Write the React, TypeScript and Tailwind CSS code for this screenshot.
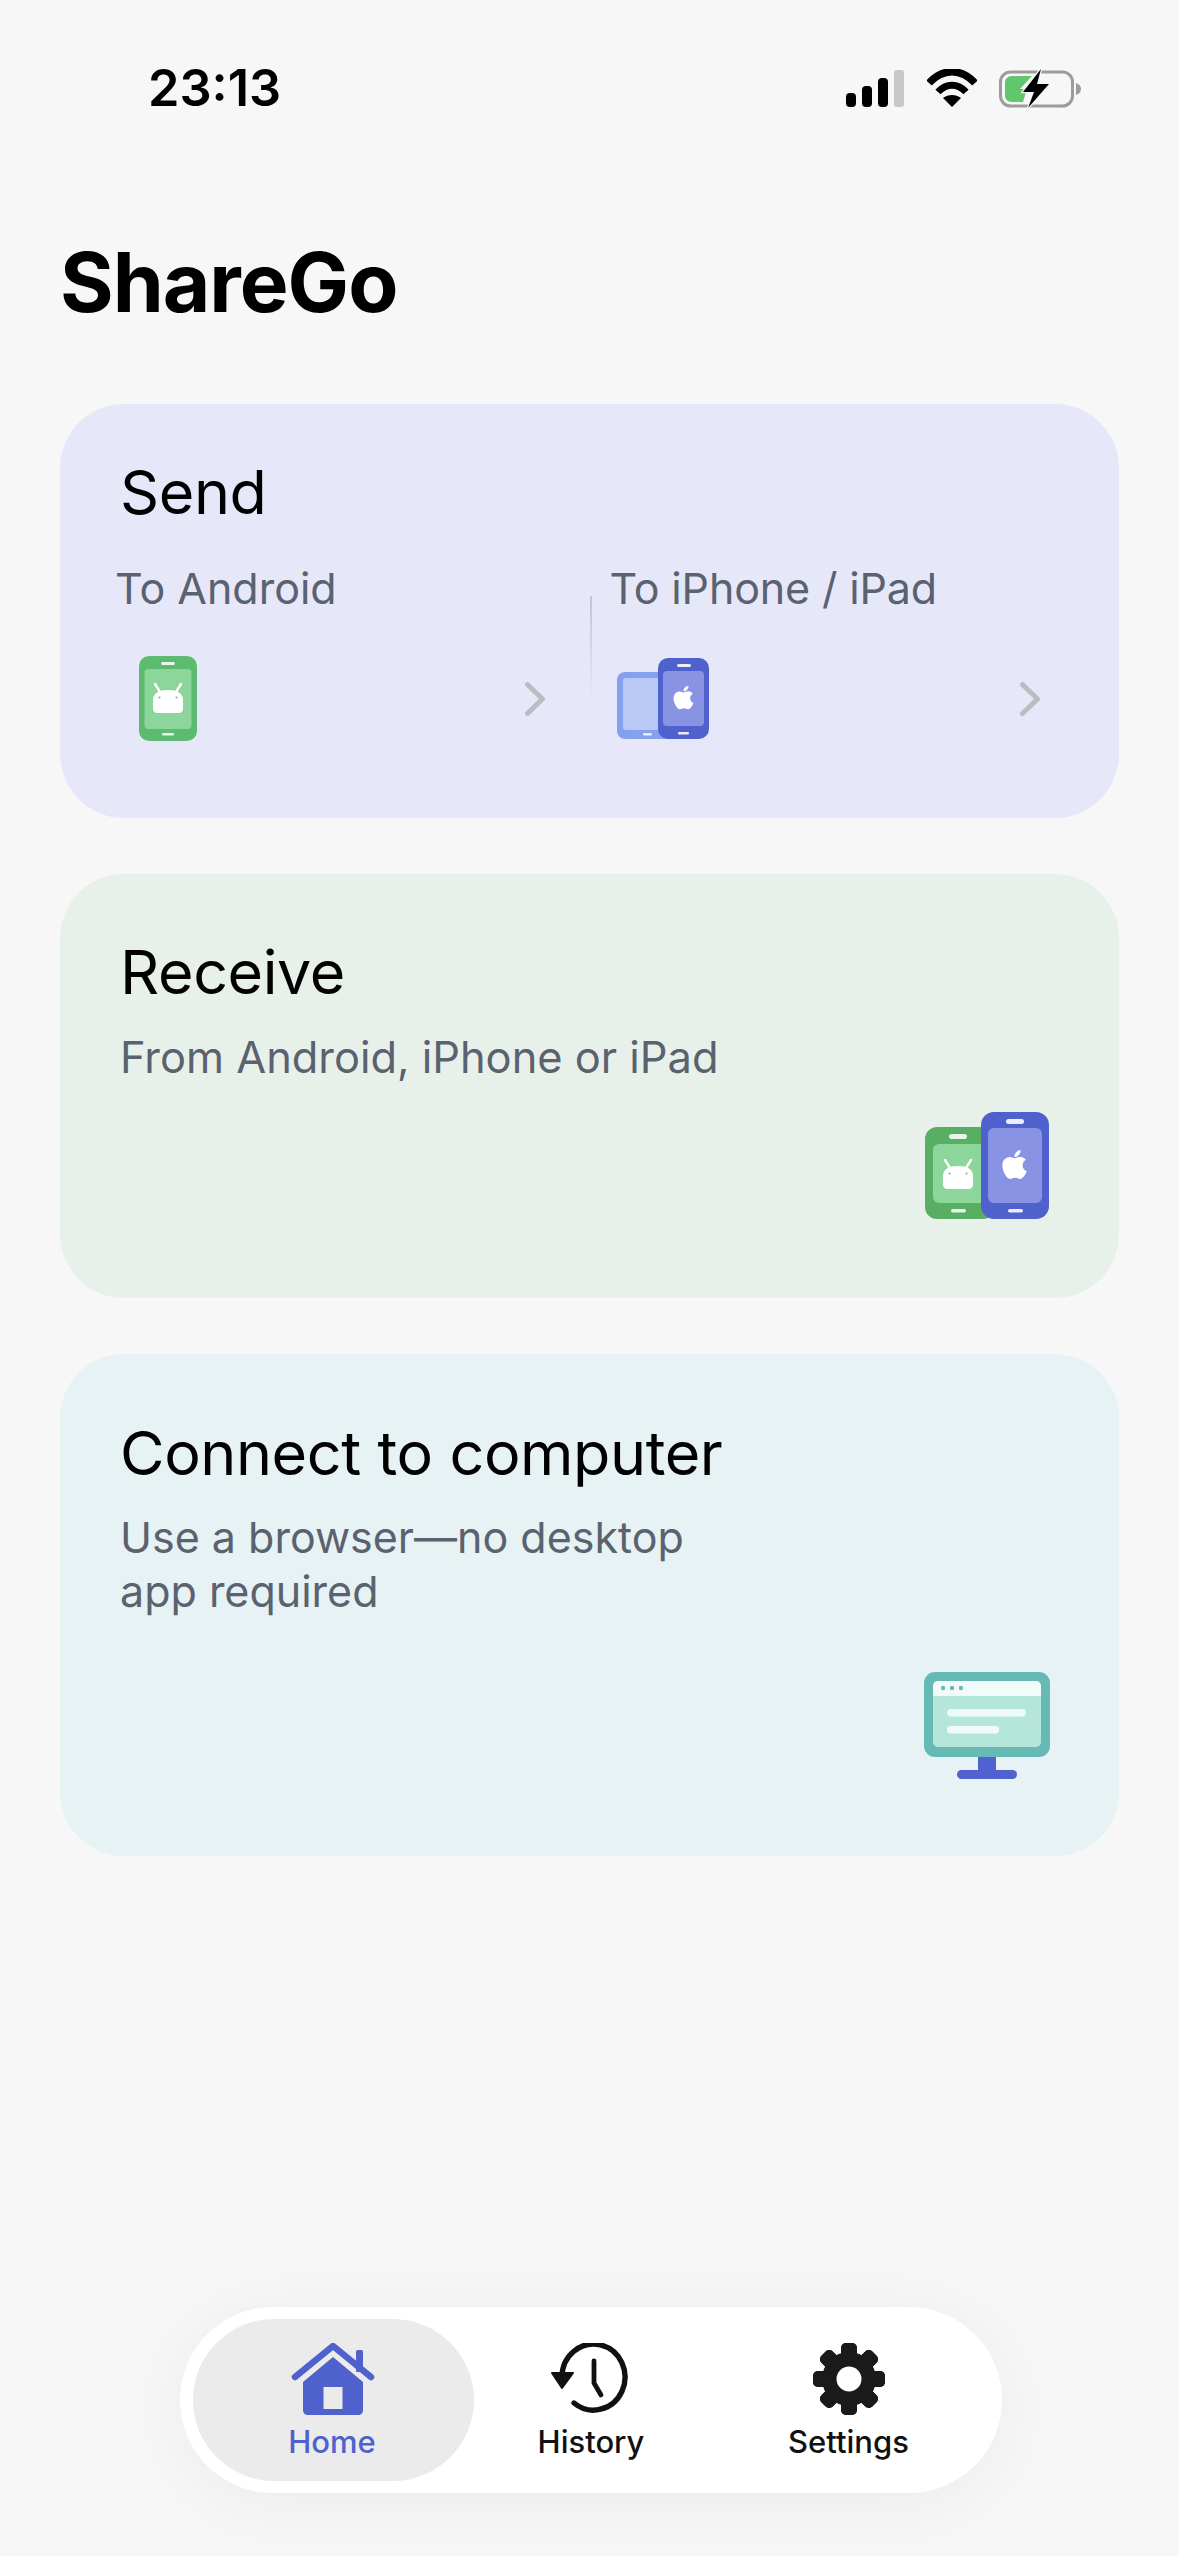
import React from "react";

const Android = ({ x, y, s }: { x: number; y: number; s: number }) => (
  <g transform={`translate(${x} ${y}) scale(${s})`} fill="#fff">
    <path d="M0 17 C0 10 6 7 15 7 C24 7 30 10 30 17 V26 C30 28 28 30 26 30 H4 C2 30 0 28 0 26 Z" />
    <path d="M7 9 L2 1 M23 9 L28 1" stroke="#fff" strokeWidth="2.4" strokeLinecap="round" />
    <circle cx="6.5" cy="14.5" r="1.1" fill="#7bb88a" />
    <circle cx="23.5" cy="14.5" r="1.1" fill="#7bb88a" />
  </g>
);

const AppleMark = ({ x, y, s }: { x: number; y: number; s: number }) => (
  <svg x={x} y={y} width={s} height={s} viewBox="0 0 384 512" fill="#fff">
    <path d="M318.7 268.7c-.2-36.7 16.4-64.4 50-84.8-18.8-26.9-47.2-41.7-84.7-44.6-35.5-2.8-74.3 20.7-88.5 20.7-15 0-49.4-19.7-76.4-19.7C63.3 141.2 4 184.8 4 273.5q0 39.3 14.4 81.2c12.8 36.7 59 126.7 107.2 125.2 25.2-.6 43-17.9 75.8-17.9 31.8 0 48.3 17.9 76.4 17.9 48.6-.7 90.4-82.5 102.6-119.3-65.2-30.7-61.7-90-61.7-91.9zm-56.6-164.2c27.3-32.4 24.8-61.9 24-72.5-24.1 1.4-52 16.4-67.9 34.9-17.5 19.8-27.8 44.3-25.6 71.9 26.1 2 49.9-11.4 69.5-34.3z" />
  </svg>
);

const AndroidPhoneSmall = () => (
  <svg width="58" height="85" viewBox="0 0 58 85" className="block">
    <rect width="58" height="85" rx="10" fill="#5cbb6e" />
    <rect x="5.5" y="13" width="47" height="60" rx="4" fill="#8cd69b" />
    <rect x="22" y="6" width="14" height="3" rx="1.5" fill="#e8f6ea" />
    <rect x="23" y="77" width="12" height="2.5" rx="1.2" fill="#e8f6ea" />
    <Android x={14} y={27} s={1} />
  </svg>
);

const IosPair = () => (
  <svg width="92" height="81" viewBox="0 0 92 81" className="block">
    <rect y="14" width="60" height="67" rx="8" fill="#85a0ec" />
    <rect x="6" y="20" width="50" height="52" rx="3" fill="#b9c9f6" />
    <rect x="26" y="75" width="9" height="2.5" rx="1.2" fill="#e6ecfc" />
    <rect x="41" width="51" height="81" rx="10" fill="#4f61cc" />
    <rect x="46" y="13" width="41" height="55" rx="4" fill="#8993e4" />
    <rect x="60" y="6" width="14" height="3" rx="1.5" fill="#eceefb" />
    <rect x="61" y="74" width="11" height="2.5" rx="1.2" fill="#eceefb" />
    <AppleMark x={53} y={26} s={27} />
  </svg>
);

const PairLarge = () => (
  <svg width="124" height="107" viewBox="0 0 124 107" className="block">
    <rect y="15" width="70" height="92" rx="12" fill="#58ae62" />
    <rect x="8" y="32" width="62" height="59" rx="6" fill="#8cd69b" />
    <rect x="24" y="22" width="18" height="5" rx="2.5" fill="#e8f6ea" />
    <rect x="26" y="97" width="15" height="3.5" rx="1.7" fill="#e8f6ea" />
    <Android x={18} y={47} s={1} />
    <rect x="56" width="68" height="107" rx="13" fill="#4f61cc" />
    <rect x="63" y="16" width="54" height="75" rx="6" fill="#8993e4" />
    <rect x="81" y="7" width="18" height="5" rx="2.5" fill="#eceefb" />
    <rect x="83" y="97" width="15" height="3.5" rx="1.7" fill="#eceefb" />
    <AppleMark x={73} y={36} s={33} />
  </svg>
);

const Monitor = () => (
  <svg width="126" height="107" viewBox="0 0 126 107" className="block">
    <rect width="126" height="85" rx="11" fill="#67b9b5" />
    <rect x="9" y="9" width="108" height="66" rx="5" fill="#b5e6da" />
    <path d="M14 9 H112 a5 5 0 0 1 5 5 V24 H9 V14 a5 5 0 0 1 5 -5 Z" fill="#f3fbfa" />
    <circle cx="19" cy="16" r="2.2" fill="#67b9b5" />
    <circle cx="28" cy="16" r="2.2" fill="#67b9b5" />
    <circle cx="37" cy="16" r="2.2" fill="#67b9b5" />
    <rect x="23" y="37" width="79" height="7.5" rx="3.7" fill="#f0fafa" />
    <rect x="23" y="54" width="52" height="7.5" rx="3.7" fill="#f0fafa" />
    <rect x="54" y="85" width="18" height="15" fill="#5161cf" />
    <rect x="33" y="98" width="60" height="9" rx="4.5" fill="#5161cf" />
  </svg>
);

const Chevron = () => (
  <svg width="20" height="34" viewBox="0 0 20 34" className="block">
    <path d="M2.5 2.5 L17.5 17 L2.5 31.5" fill="none" stroke="#bcbcc2" strokeWidth="5" strokeLinecap="round" strokeLinejoin="round" />
  </svg>
);

const StatusIcons = () => (
  <div className="flex items-center">
    <svg width="58" height="37" viewBox="0 0 58 37" className="block">
      <rect y="23" width="10" height="14" rx="4" fill="#000" />
      <rect x="16" y="16" width="10" height="21" rx="4" fill="#000" />
      <rect x="32" y="8" width="10" height="29" rx="4" fill="#000" />
      <rect x="48" width="10" height="37" rx="3" fill="#c7c7c7" />
    </svg>
    <svg width="50" height="38" viewBox="0 0 50 38" className="block ml-[23px]">
      <path d="M2 14 C16 -1 34 -1 48 14" stroke="#000" strokeWidth="7.5" fill="none" strokeLinejoin="round" />
      <path d="M11 23 C19 14 31 14 39 23" stroke="#000" strokeWidth="7" fill="none" />
      <path d="M25 38 L16 29 C21 25 29 25 34 29 Z" fill="#000" />
    </svg>
    <svg width="83" height="39" viewBox="0 0 83 39" className="block ml-[22px]">
      <rect x="1.5" y="3" width="72" height="34" rx="10" fill="none" stroke="#9c9c9c" strokeWidth="3" />
      <path d="M77 14 C80 15 82 17 82 20 C82 23 80 25 77 26 Z" fill="#9c9c9c" />
      <path d="M13 7 H33 L21 20 H28 L24 33 H13 C9 33 6 30 6 27 V13 C6 10 9 7 13 7 Z" fill="#62c66d" />
      <path d="M42 0 L24 23 H35 L29 39 L50 15 H38 Z" fill="#000" stroke="#f7f7f7" strokeWidth="2.5" paintOrder="stroke" />
    </svg>
  </div>
);

const HomeIcon = () => (
  <svg width="84" height="72" viewBox="0 0 84 72" className="block">
    <path d="M42 14 L72 39 V67 C72 70 70 72 67 72 H17 C14 72 12 70 12 67 V39 Z" fill="#4f61cc" />
    <rect x="32.5" y="44" width="19" height="22" fill="#ebebec" />
    <path d="M4 34 L42 3 L80 34" stroke="#4f61cc" strokeWidth="6.5" fill="none" strokeLinecap="round" strokeLinejoin="round" />
    <rect x="65" y="7" width="7" height="22" rx="1.5" fill="#4f61cc" />
  </svg>
);

const HistoryIcon = () => (
  <svg width="80" height="72" viewBox="0 0 80 72" className="block">
    <path d="M11 34 A 31.5 33 0 1 1 23 60" stroke="#111" strokeWidth="5.4" fill="none" strokeLinecap="round" />
    <path d="M1 30 L22 30 L11 45 Z" fill="#111" stroke="#111" strokeWidth="2" strokeLinejoin="round" />
    <path d="M43 18 V40 L50 52" stroke="#111" strokeWidth="4.8" fill="none" strokeLinecap="round" strokeLinejoin="round" />
  </svg>
);

const GearIcon = () => {
  const teeth = [0, 45, 90, 135, 180, 225, 270, 315];
  return (
    <svg width="74" height="72" viewBox="0 0 74 72" className="block">
      <g fill="#1a1a1a">
        {teeth.map((a) => (
          <rect key={a} x="29" y="0" width="16" height="72" rx="5" transform={`rotate(${a} 37 36)`} />
        ))}
        <circle cx="37" cy="36" r="27" />
      </g>
      <circle cx="37" cy="36" r="12.5" fill="#fff" />
    </svg>
  );
};

export default function App() {
  return (
    <div className="w-[1179px] h-[2556px] bg-[#f7f7f7] flex flex-col text-black font-['Inter','Liberation_Sans',sans-serif]">
      <div className="flex items-center justify-between pt-[64px] pl-[148px] pr-[97px] h-[112px]">
        <span className="font-semibold text-[50.5px] leading-[46px]">23:13</span>
        <StatusIcons />
      </div>

      <h1 className="font-bold text-[82px] leading-[90px] ml-[60px] mt-[126px] tracking-[-1px]">ShareGo</h1>

      <div className="flex flex-col gap-[56px] px-[60px] mt-[76px]">
        <section className="h-[414px] rounded-[64px] bg-[#e6e8fa] pt-[50px]">
          <h2 className="text-[61px] leading-[76px] pl-[60px] tracking-[-0.4px]">Send</h2>
          <div className="grid grid-cols-2 mt-[30px]">
            <div className="pl-[55px] pr-[36px]">
              <p className="text-[43px] leading-[56px] text-[#5a6270]">To Android</p>
              <div className="flex items-center justify-between mt-[40px] pl-[24px] pr-[9px]">
                <AndroidPhoneSmall />
                <Chevron />
              </div>
            </div>
            <div className="pl-[20px] pr-[79px] relative">
              <div className="absolute left-0 top-[36px] h-[106px] w-[2px] bg-gradient-to-b from-[#c4c5d2] to-[#e6e8fa]" />
              <p className="text-[43px] leading-[56px] text-[#5a6270] tracking-[-0.15px]">To iPhone / iPad</p>
              <div className="flex items-center justify-between mt-[42px] pl-[7px]">
                <IosPair />
                <Chevron />
              </div>
            </div>
          </div>
        </section>

        <section className="h-[424px] rounded-[64px] bg-[#e8f1e9] pt-[60px] pl-[60px] pr-[70px] flex flex-col">
          <h2 className="text-[61px] leading-[76px] tracking-[-0.4px]">Receive</h2>
          <p className="text-[43.4px] leading-[54px] text-[#5a6270] mt-[20px]">From Android, iPhone or iPad</p>
          <div className="flex justify-end mt-[28px]">
            <PairLarge />
          </div>
        </section>

        <section className="h-[502px] rounded-[64px] bg-[#e7f2f4] pt-[61px] pl-[60px] pr-[69px] flex flex-col">
          <h2 className="text-[61px] leading-[76px] tracking-[-0.4px]">Connect to computer</h2>
          <p className="text-[43px] leading-[54px] text-[#5a6270] mt-[19px] w-[600px]">Use a browser—no desktop app required</p>
          <div className="flex justify-end mt-[54px]">
            <Monitor />
          </div>
        </section>
      </div>

      <div className="flex-1" />

      <nav className="self-center mb-[63px] w-[822px] h-[186px] rounded-[93px] bg-white shadow-[0_10px_80px_rgba(0,0,0,0.05)] flex items-center pl-[13px] pr-[13px] ml-[2px]">
        <div className="w-[281px] h-[162px] rounded-[81px] bg-[#ebebec] flex flex-col items-center justify-start pt-[24px]">
          <HomeIcon />
          <span className="text-[31px] leading-[40px] font-medium text-[#4f61cc] mt-[7px] ml-[-2px]">Home</span>
        </div>
        <div className="w-[235px] h-[162px] flex flex-col items-center pt-[24px]">
          <HistoryIcon />
          <span className="text-[31px] leading-[40px] font-medium text-[#111] mt-[7px]">History</span>
        </div>
        <div className="w-[280px] h-[162px] flex flex-col items-center pt-[24px]">
          <GearIcon />
          <span className="text-[31px] leading-[40px] font-medium text-[#111] mt-[7px]">Settings</span>
        </div>
      </nav>
    </div>
  );
}
